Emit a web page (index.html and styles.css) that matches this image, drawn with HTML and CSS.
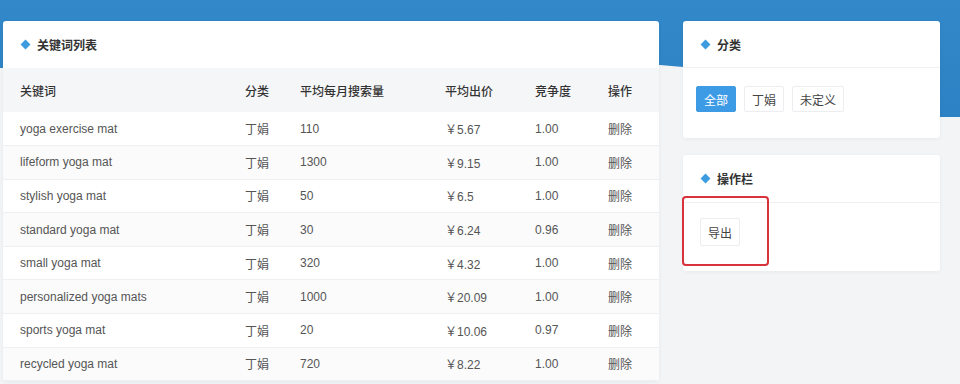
FILE: index.html
```html
<!DOCTYPE html>
<html lang="zh-CN">
  <head>
    <meta charset="UTF-8" />
    <meta name="viewport" content="width=device-width, initial-scale=1.0" />
    <title>关键词列表</title>
    <link rel="stylesheet" href="styles.css">
  </head>
  <body>
    <div class="banner"></div>
    <main>
      <section class="kort liste">
        <h2 class="titel">关键词列表</h2>
        <table>
          <thead>
            <tr>
              <th class="k1">关键词</th>
              <th class="k2">分类</th>
              <th class="k3">平均每月搜索量</th>
              <th class="k4">平均出价</th>
              <th class="k5">竞争度</th>
              <th>操作</th>
            </tr>
          </thead>
          <tbody>
            <tr><td>yoga exercise mat</td><td>丁娟</td><td>110</td><td>￥5.67</td><td>1.00</td><td>删除</td></tr>
            <tr><td>lifeform yoga mat</td><td>丁娟</td><td>1300</td><td>￥9.15</td><td>1.00</td><td>删除</td></tr>
            <tr><td>stylish yoga mat</td><td>丁娟</td><td>50</td><td>￥6.5</td><td>1.00</td><td>删除</td></tr>
            <tr><td>standard yoga mat</td><td>丁娟</td><td>30</td><td>￥6.24</td><td>0.96</td><td>删除</td></tr>
            <tr><td>small yoga mat</td><td>丁娟</td><td>320</td><td>￥4.32</td><td>1.00</td><td>删除</td></tr>
            <tr><td>personalized yoga mats</td><td>丁娟</td><td>1000</td><td>￥20.09</td><td>1.00</td><td>删除</td></tr>
            <tr><td>sports yoga mat</td><td>丁娟</td><td>20</td><td>￥10.06</td><td>0.97</td><td>删除</td></tr>
            <tr><td>recycled yoga mat</td><td>丁娟</td><td>720</td><td>￥8.22</td><td>1.00</td><td>删除</td></tr>
          </tbody>
        </table>
      </section>

      <aside class="side">
        <section class="kort">
          <h2 class="titel streg">分类</h2>
          <nav class="indhold">
            <button class="knap valgt">全部</button>
            <button class="knap">丁娟</button>
            <button class="knap">未定义</button>
          </nav>
        </section>
        <section class="kort">
          <h2 class="titel streg hoej">操作栏</h2>
          <div class="indhold eksport">
            <button class="knap">导出</button>
            <span class="markering"></span>
          </div>
        </section>
      </aside>
    </main>
  </body>
</html>
```

FILE: styles.css
```css
* {
  box-sizing: border-box;
  margin: 0;
  padding: 0;
}

body {
  background: #f3f4f6;
  font-family: "Liberation Sans", "Noto Sans CJK SC", sans-serif;
  font-size: 12px;
  color: #555;
  position: relative;
  overflow: hidden;
  height: 384px;
}

.banner {
  position: absolute;
  top: 0;
  left: 0;
  width: 960px;
  height: 118px;
  background: linear-gradient(#3388c9, #2c82c4);
  clip-path: polygon(0 0, 960px 0, 960px 117px, 940px 117px, 683px 67px, 660px 65px, 0 68px);
}

main {
  position: relative;
  display: grid;
  grid-template-columns: 656px 257px;
  gap: 24px;
  padding: 21px 0 0 3px;
  align-items: start;
}

.kort {
  background: #fff;
  border-radius: 3px;
  box-shadow: 0 1px 4px rgba(0, 0, 0, 0.05);
}

.titel {
  display: flex;
  align-items: center;
  gap: 8px;
  height: 47px;
  padding-left: 19px;
  font-size: 12px;
  font-weight: 600;
  color: #333;
}

.hoej {
  height: 48px;
}

.titel::before {
  content: "";
  width: 7px;
  height: 7px;
  background: #3d9be0;
  transform: rotate(45deg);
}

.streg {
  border-bottom: 1px solid #eef0f2;
}

table {
  width: 100%;
  border-collapse: collapse;
}

th {
  height: 44px;
  background: #f5f6f8;
  text-align: left;
  font-weight: 500;
  color: #333;
}

td {
  height: 33.6px;
  border-bottom: 1px solid #eef0f2;
}

tbody tr:nth-child(even) {
  background: #fbfbfc;
}

th,
td {
  padding: 0;
}

th:first-child,
td:first-child {
  padding-left: 17px;
}

.k1 {
  width: 242px;
}
.k2 {
  width: 55px;
}
.k3 {
  width: 145px;
}
.k4 {
  width: 90px;
}
.k5 {
  width: 73px;
}

.side {
  display: flex;
  flex-direction: column;
  gap: 17px;
}

.indhold {
  display: flex;
  gap: 8px;
  padding: 18px 13px 26px;
}

.eksport {
  position: relative;
  padding: 15px 17px 25px;
}

.knap {
  font-family: inherit;
  font-size: 12px;
  color: #444;
  background: #fff;
  border: 1px solid #ebedf0;
  border-radius: 2px;
  height: 26px;
  padding: 0 7px;
}

.eksport .knap {
  height: 28px;
}

.valgt {
  background: #3d9be6;
  border-color: #3d9be6;
  color: #fff;
}

.markering {
  position: absolute;
  left: -1px;
  top: -7px;
  width: 87px;
  height: 70px;
  border: 2px solid #d8323c;
  border-radius: 4px;
}
```
